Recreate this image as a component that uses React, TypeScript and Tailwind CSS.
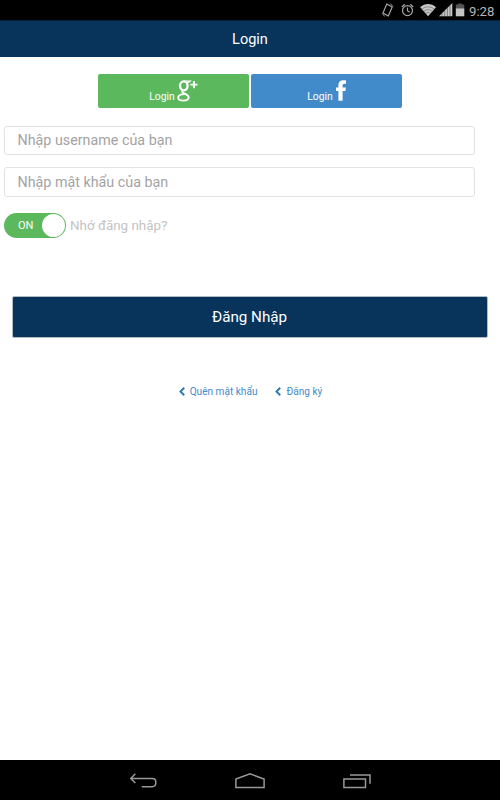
import type { ReactNode } from 'react'

interface SocialButtonProps {
  className: string
  children: ReactNode
}

interface FieldProps {
  type: string
  placeholder: string
  className: string
}

function StatusBar() {
  return (
    <div className="flex h-5 items-center justify-end bg-black pr-[5px] text-[#b5b5b5]">
      <svg aria-hidden="true" className="h-5 w-[88px]" viewBox="0 0 88 20" fill="none">
        {/* vibrate */}
        <g stroke="#a5a5a5" strokeWidth="1.2" strokeLinejoin="round">
          <path d="M5.8 3.9 11.2 7 7.3 16.1 2 13Z" />
          <path d="M1.2 13.4 3.6 16.4M9.4 3.6l2.6 3" strokeWidth=".9" />
        </g>
        {/* alarm */}
        <g stroke="#a5a5a5" strokeWidth="1.2">
          <circle cx="26.5" cy="10.6" r="5" />
          <path d="M26.5 7.5v3.3l2.2 1.5M20.8 7l2.9-2.8M32.2 7l-2.9-2.8" />
        </g>
        {/* wifi */}
        <path d="M39.2 7.3C44.1 3 50 3 55 7.3L47.1 16.2Z" fill="#c8c8c8" />
        <path d="M40.8 9.3c4-3.3 8.6-3.3 12.6 0M42.8 11.4c2.8-2.2 5.8-2.2 8.6 0M44.6 13.4c1.8-1.2 3.2-1.2 5 0" stroke="#222" strokeWidth=".4" />
        {/* signal */}
        <path d="M58 16.3 71.3 3.1v13.2Z" fill="#c6c6c6" />
        <path d="M61 12v5M63.7 9v8M66.4 7v10M69 4v13" stroke="#333" strokeWidth=".5" />
        {/* battery */}
        <path d="M77.2 3.4h3.6v1.2h2.5v3.7h-8.5V4.6h2.4Z" fill="#555" />
        <path d="M74.8 8.3h8.5v8h-8.5Z" fill="#c4c4c4" />
      </svg>
      <span className="w-[26px] whitespace-nowrap pt-[3px] text-[13.2px] leading-none">9:28</span>
    </div>
  )
}

function SocialButton({ className, children }: SocialButtonProps) {
  return (
    <button
      type="button"
      className={`flex h-[34px] w-[151px] items-start justify-center rounded-[2px] pt-[6px] text-[10.3px] text-white ${className}`}
    >
      <span className="mr-[3px] mt-[11px] leading-3">Login</span>
      {children}
    </button>
  )
}

function GooglePlusIcon() {
  return (
    <svg aria-hidden="true" className="-ml-px h-[22px] w-[21px]" viewBox="0 0 21 22" fill="none" stroke="#fff">
      <ellipse cx="6.8" cy="5.8" rx="3.8" ry="4.5" strokeWidth="2.3" />
      <path d="M6.5 1h6.8l-1.8 1.3H9.2" strokeWidth="1.2" />
      <path d="M6 10.3c-1.8 1.4-.6 2.2 1.3 3.1 2.4 1.1 4.4 1.9 4.4 3.9 0 2.2-2.5 3.3-5.4 3.3-2.8 0-5.1-.9-5.1-3.1 0-2.4 2.9-3.3 6.3-3.4" strokeWidth="1.8" />
      <path d="M16.9 1v7.2M13.3 4.6h7.2" strokeWidth="1.9" />
    </svg>
  )
}

function FacebookIcon() {
  return (
    <svg aria-hidden="true" className="h-[21px] w-[10px]" viewBox="0 0 10 21" fill="#fff">
      <path d="M10 .3v3.5H8.2c-1.2 0-1.6.7-1.6 1.7v2.1h3.3L9.4 11H6.6v9.7H2.4V11H0V7.6h2.4V5c0-3 1.9-4.8 4.8-4.8Z" />
    </svg>
  )
}

function Field({ type, placeholder, className }: FieldProps) {
  return (
    <input
      type={type}
      placeholder={placeholder}
      className={`block w-[471px] rounded-[3px] border border-[#e2e2e2] bg-white pl-[12.5px] text-[14.3px] text-gray-700 placeholder:text-[#a3a3a3] ${className}`}
    />
  )
}

function BackLink({ children }: { children: ReactNode }) {
  return (
    <a href="#" className="flex items-center gap-[5px]">
      <svg aria-hidden="true" className="-mt-px h-[9px] w-[6px]" viewBox="0 0 6 9" fill="none" stroke="#337ab7" strokeWidth="2">
        <path d="M5.2.8 1.5 4.5l3.7 3.7" />
      </svg>
      {children}
    </a>
  )
}

function NavigationBar() {
  return (
    <nav className="flex h-10 items-center justify-center gap-[78px] bg-black pt-px">
      <svg aria-label="Back" className="h-4 w-7" viewBox="0 0 28 16" fill="none" stroke="#999" strokeWidth="1.5">
        <path d="M6.3.8 1.8 5.4l4.5 4.7M1.8 5.4h21.4q3.6 0 3.6 3.6v1.1q0 3.6-3.6 3.6H12.8" />
      </svg>
      <svg aria-label="Home" className="h-4 w-[30px]" viewBox="0 0 30 16" fill="none" stroke="#999" strokeWidth="1.5">
        <path d="M.9 14.5V6L15 .9 29.1 6v8.5Z" />
      </svg>
      <svg aria-label="Recent apps" className="h-4 w-7" viewBox="0 0 28 16" fill="none" stroke="#999" strokeWidth="1.5">
        <path d="M.9 6h21.6v8.6H.9ZM7 2h20v8.7" />
      </svg>
    </nav>
  )
}

export default function App() {
  return (
    <div className="flex h-[800px] w-[500px] flex-col overflow-hidden bg-white font-['Roboto',sans-serif]">
      <StatusBar />
      <header className="flex h-[37px] items-center justify-center border-t border-[#062440] bg-[#08345c] pt-px text-[14.5px] text-white">
        Login
      </header>

      <main className="flex-1 pt-[17.4px]">
        <div className="flex justify-center gap-[2px]">
          <SocialButton className="bg-[#5cb85c]">
            <GooglePlusIcon />
          </SocialButton>
          <SocialButton className="bg-[#428bca]">
            <FacebookIcon />
          </SocialButton>
        </div>

        <form className="mt-[17.6px]">
          <div className="flex flex-col gap-3 pl-1">
            <Field type="text" placeholder="Nhập username của bạn" className="h-[29px] pb-px" />
            <Field type="password" placeholder="Nhập mật khẩu của bạn" className="h-[30px]" />
          </div>

          <div className="mt-4 flex items-center pl-1">
            <button
              type="button"
              role="switch"
              aria-checked="true"
              className="flex h-[25px] w-[62px] items-center justify-between rounded-full bg-[#5cb85c] pl-[14px] pr-[1px] text-[11px] text-white"
            >
              <span className="pt-[2px]">ON</span>
              <span className="h-[23px] w-[23px] rounded-full bg-white" />
            </button>
            <span className="ml-1 pt-[2px] text-[13.4px] text-[#c3c3c3]">Nhớ đăng nhập?</span>
          </div>

          <button
            type="submit"
            className="ml-3 mt-[58px] flex h-[42px] w-[476px] items-center justify-center rounded-[2px] border border-[#b3bac2] bg-[#08345c] pr-px text-[15.2px] text-white"
          >
            Đăng Nhập
          </button>
        </form>

        <div className="mt-[46px] flex justify-center gap-[18px] pl-px text-[10.1px] leading-4 text-[#428bca]">
          <BackLink>Quên mật khẩu</BackLink>
          <BackLink>Đăng ký</BackLink>
        </div>
      </main>

      <NavigationBar />
    </div>
  )
}
